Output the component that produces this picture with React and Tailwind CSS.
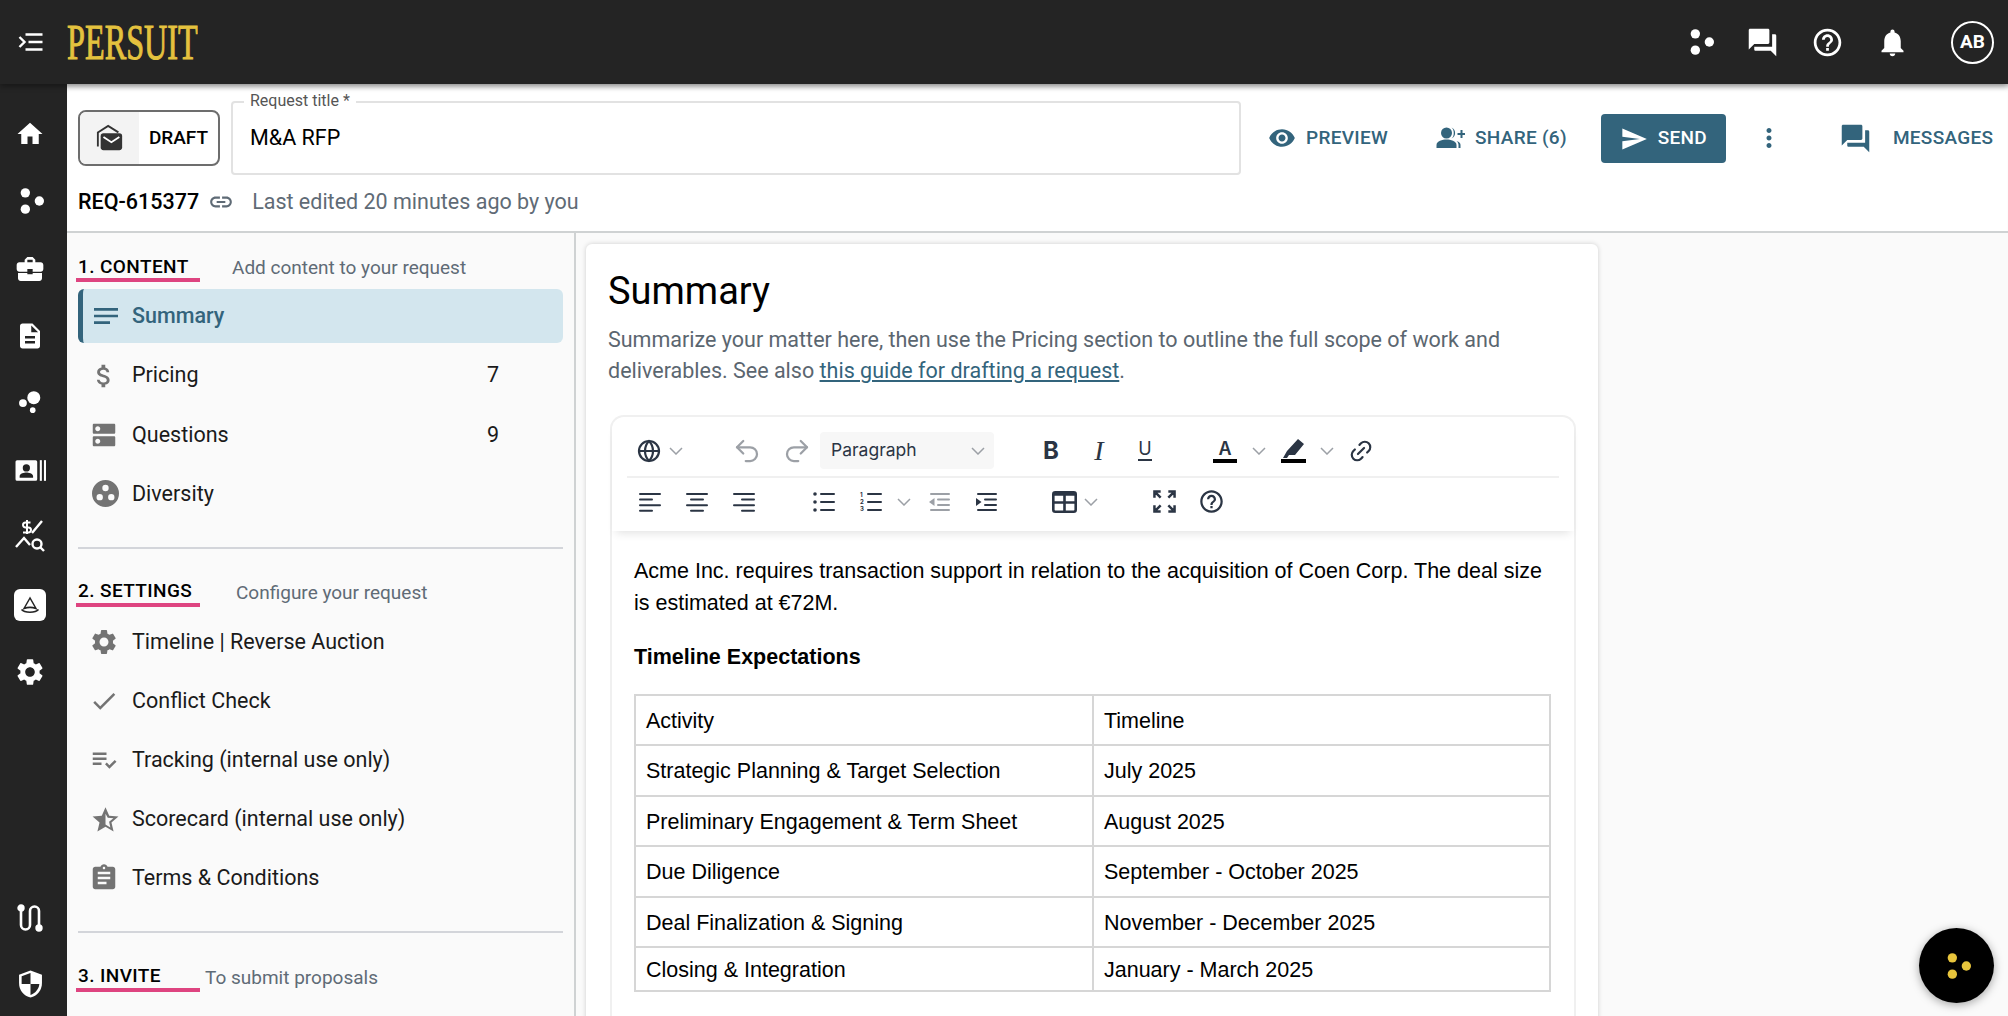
import {
  MdHome, MdBusinessCenter, MdDescription, MdSettings, MdForum, MdHelpOutline, MdNotifications,
  MdVisibility, MdSend, MdMoreVert, MdNotes, MdAttachMoney, MdDns, MdCheck,
  MdPlaylistAddCheck, MdAssignment, MdLink,
} from "react-icons/md"
import { Globe, Link2, Undo2, Redo2 } from "lucide-react"

const Dots = ({ className, fill = "currentColor" }) => (
  <svg viewBox="0 0 24 24" className={className} fill={fill}>
    <circle cx="8" cy="5" r="4" />
    <circle cx="8" cy="19" r="4" />
    <circle cx="20" cy="12" r="4" />
  </svg>
)

const Bubbles = ({ className }) => (
  <svg viewBox="0 0 24 24" className={className} fill="currentColor">
    <circle cx="15.5" cy="8" r="6" />
    <circle cx="5.5" cy="13" r="3.6" />
    <circle cx="14.5" cy="19.5" r="2.6" />
  </svg>
)

const PersonCard = ({ className }) => (
  <svg viewBox="0 0 30 24" className={className} fill="currentColor">
    <path d="M2 2h18a1.5 1.5 0 0 1 1.5 1.5v17A1.5 1.5 0 0 1 20 22H2A1.5 1.5 0 0 1 .5 20.500v-17A1.500 1.500 0 0 1 2 2zm9 4a3.500 3.500 0 1 0 0 7 3.500 3.500 0 0 0 0-7zm-6.500 13h13v-1.500c0-2.500-4.500-3.500-6.500-3.500s-6.500 1-6.500 3.500z" fillRule="evenodd" />
    <rect x="24" y="2" width="2" height="20" />
    <rect x="28" y="2" width="2" height="20" />
  </svg>
)

const ChartSearch = ({ className }) => (
  <svg viewBox="0 0 30 36" className={className} fill="none" stroke="currentColor" strokeWidth="2.400">
    <path d="M12 3v14M15.500 5.500H10.500a2.500 2.500 0 0 0 0 5h3a2.500 2.500 0 0 1 0 5H8" strokeWidth="2" />
    <path d="M1 30l8-9 6 7M17 16l10-12" />
    <circle cx="22" cy="27" r="4.500" />
    <path d="M25.500 30.500L29 34" />
  </svg>
)

const Route = ({ className }) => (
  <svg viewBox="0 0 26 28" className={className} fill="none" stroke="currentColor" strokeWidth="2.600">
    <circle cx="4" cy="4" r="2.400" fill="currentColor" />
    <circle cx="22" cy="24" r="2.400" fill="currentColor" />
    <path d="M4 6v15a4.500 4.500 0 0 0 9 0V7a4.500 4.500 0 0 1 9 0v15" />
  </svg>
)

const Shield = ({ className }) => (
  <svg viewBox="0 0 24 28" className={className} fill="currentColor">
    <path d="M12 1L1 5v8c0 7 4.700 12.500 11 14 6.300-1.500 11-7 11-14V5z" />
    <path d="M12 14H3.500V6.500L12 3.500zM12 14h8.500c-.5 5-4 9-8.500 10.500z" fill="#242424" />
  </svg>
)

const Boat = ({ className }) => (
  <svg viewBox="0 0 24 24" className={className} fill="none" stroke="#242424" strokeWidth="1.500">
    <path d="M12 5l-6 10.500c4 -1.500 8 -1.500 12 0z" />
    <path d="M3.500 16.500c3 3.500 14 3.500 17 0" />
  </svg>
)

const DraftIcon = ({ className }) => (
  <svg viewBox="0 0 30 30" className={className}>
    <path d="M2 24V9l11-7 11 7" fill="none" stroke="#333" strokeWidth="2" />
    <rect x="5" y="10" width="23" height="18" rx="3" fill="#333" />
    <path d="M8 14l8.500 5.500L25 14" fill="none" stroke="#fff" strokeWidth="2" />
  </svg>
)

const ShareIcon = ({ className }) => (
  <svg viewBox="0 0 28 24" className={className} fill="currentColor">
    <circle cx="10" cy="7" r="5.500" />
    <path d="M0 22v-3c0-4 6-5.500 10-5.500s10 1.500 10 5.500v3z" />
    <path d="M15 1.500a6 6 0 0 1 0 11c3-2 3-9 0-11zM20 15c3 .7 4 2.500 4 4v3h-2v-3c0-1.500-.7-3-2-4z" />
    <path d="M24 4v3h-3v2h3v3h2V9h3V7h-3V4z" />
  </svg>
)

const Diversity = ({ className }) => (
  <svg viewBox="0 0 28 30" className={className} fill="currentColor">
    <path fillRule="evenodd" d="M14 1a14 14 0 1 1 0 28 14 14 0 0 1 0-28zm0 5a3.300 3.300 0 1 0 0 6.600A3.300 3.300 0 0 0 14 6zm-6 9.500a3.300 3.300 0 1 0 0 6.600 3.300 3.300 0 0 0 0-6.600zm12 0a3.300 3.300 0 1 0 0 6.600 3.300 3.300 0 0 0 0-6.600z" />
  </svg>
)

const StarHalf = ({ className }) => (
  <svg viewBox="0 0 24 24" className={className} fill="none">
    <path d="M12 1l3.300 7.600 8.200.7-6.200 5.400 1.900 8L12 18.500 4.800 22.700l1.900-8L.5 9.300l8.200-.7z" fill="currentColor" />
    <path d="M12 6.800v9.600l4.300 2.600-1.100-4.900 3.800-3.300-5-.4z" fill="#fafafa" />
  </svg>
)

const MenuToggle = ({ className }) => (
  <svg viewBox="0 0 24 20" className={className} fill="none" stroke="currentColor" strokeWidth="2.400">
    <path d="M7 2.500h17M10 10h14M7 17.500h17" />
    <path d="M1 5l5 5-5 5" />
  </svg>
)

// little bars icons of the editor toolbar, each row is [x, width]
const Bars = ({ rows, className }) => (
  <svg viewBox="0 0 22 20" className={className} fill="currentColor">
    {rows.map(([x, w], i) => (
      <rect key={i} x={x} y={1 + i * 5.600} width={w} height="2" rx="1" />
    ))}
  </svg>
)

const BulletList = ({ className }) => (
  <svg viewBox="0 0 22 20" className={className} fill="currentColor">
    {[2, 10, 18].map((y) => (
      <g key={y}>
        <rect x="7" y={y - 1} width="15" height="2" rx="1" />
        <circle cx="2" cy={y} r="1.800" />
      </g>
    ))}
  </svg>
)

const NumberedList = ({ className = "" }) => (
  <div className={`w-[22px] h-[20px] flex ${className}`}>
    <div className="w-[7px] flex flex-col justify-between font-['Inter',sans-serif] text-[6px] leading-[6px] font-bold">
      <span>1</span>
      <span>2</span>
      <span>3</span>
    </div>
    <svg viewBox="0 0 15 20" className="w-[15px] h-[20px]" fill="currentColor">
      {[1, 9, 17].map((y) => (
        <rect key={y} y={y} width="15" height="2" rx="1" />
      ))}
    </svg>
  </div>
)

const IndentIcon = ({ outdent, className }) => (
  <svg viewBox="0 0 22 20" className={className} fill="currentColor">
    <rect x="2" y="1" width="20" height="2" rx="1" />
    <rect x="9" y="6.600" width="13" height="2" rx="1" />
    <rect x="9" y="12" width="13" height="2" rx="1" />
    <rect x="2" y="17" width="20" height="2" rx="1" />
    <path d={outdent ? "M6.500 6v8L1 10z" : "M1 6v8l5.500-4z"} />
  </svg>
)

const TableIcon = ({ className }) => (
  <svg viewBox="0 0 25 22" className={className} fill="none" stroke="currentColor" strokeWidth="2.600">
    <rect x="1.300" y="1.300" width="22.400" height="19.400" rx="2" />
    <path d="M12.500 2v18M1 11.500h23" />
    <path d="M1 3h23" strokeWidth="3.500" />
  </svg>
)

const ExpandIcon = ({ className }) => (
  <svg viewBox="0 0 24 24" className={className} fill="none" stroke="currentColor" strokeWidth="2.600">
    <path d="M1.500 8V1.500H8M22.500 8V1.500H16M1.500 16v6.500H8M22.500 16v6.500H16M3 3l5 5M21 3l-5 5M3 21l5-5M21 21l-5-5" />
  </svg>
)

const Chevron = ({ className = "" }) => (
  <svg viewBox="0 0 14 8" className={`w-[14px] h-[8px] text-[#9ca0a6] ${className}`} fill="none" stroke="currentColor" strokeWidth="1.500">
    <path d="M1 1l6 6 6-6" />
  </svg>
)

const railTop = [
  { icon: <MdHome className="w-[30px] h-[30px]" />, y: "mt-[35px]" },
  { icon: <Dots className="w-[28px] h-[28px]" />, y: "mt-[38px]" },
  { icon: <MdBusinessCenter className="w-[32px] h-[32px]" />, y: "mt-[38px]" },
  { icon: <MdDescription className="w-[30px] h-[30px]" />, y: "mt-[36px]" },
  { icon: <Bubbles className="w-[26px] h-[26px]" />, y: "mt-[38px]" },
  { icon: <PersonCard className="w-[31px] h-[25px]" />, y: "mt-[43px]" },
  { icon: <ChartSearch className="w-[30px] h-[36px]" />, y: "mt-[34px]" },
]

const contentItems = [
  { label: "Pricing", count: "7", icon: <MdAttachMoney className="w-[30px] h-[30px]" /> },
  { label: "Questions", count: "9", icon: <MdDns className="w-[30px] h-[30px]" /> },
  { label: "Diversity", icon: <Diversity className="w-[27px] h-[29px] ml-[3px]" /> },
]

const settingsItems = [
  { label: "Timeline | Reverse Auction", icon: <MdSettings className="w-[30px] h-[30px]" /> },
  { label: "Conflict Check", icon: <MdCheck className="w-[30px] h-[30px]" /> },
  { label: "Tracking (internal use only)", icon: <MdPlaylistAddCheck className="w-[30px] h-[30px]" /> },
  { label: "Scorecard (internal use only)", icon: <StarHalf className="w-[27px] h-[27px] ml-[3px]" /> },
  { label: "Terms & Conditions", icon: <MdAssignment className="w-[30px] h-[30px]" /> },
]

const timeline = [
  ["Activity", "Timeline", "h-[50px]"],
  ["Strategic Planning & Target Selection", "July 2025", "h-[51px]"],
  ["Preliminary Engagement & Term Sheet", "August 2025", "h-[50px]"],
  ["Due Diligence", "September - October 2025", "h-[51px]"],
  ["Deal Finalization & Signing", "November - December 2025", "h-[50px]"],
  ["Closing & Integration", "January - March 2025", "h-[44px]"],
]

const SectionHead = ({ title, hint, hintClass, className = "" }) => (
  <div className={`flex items-center relative h-[28px] ${className}`}>
    <span className="text-[19px] font-medium tracking-[0.4px] text-black">{title}</span>
    <span className={`absolute top-[1px] text-[19px] text-[#5f6b76] ${hintClass}`}>{hint}</span>
    <div className="absolute left-[-2px] top-[25px] w-[124px] h-[4px] bg-[#de4480]" />
  </div>
)

const NavItem = ({ icon, label, count }) => (
  <div className="flex items-center h-[59.200px] text-[21.500px] text-[#1a1a1a]">
    <div className="w-[54px] pl-[11px] text-[#737373] flex items-center">{icon}</div>
    <span>{label}</span>
    {count && <span className="ml-auto mr-[64px]">{count}</span>}
  </div>
)

export default function App() {
  return (
    <div className="w-[2008px] h-[1016px] overflow-hidden relative flex flex-col bg-[#fafafa] font-['Roboto',sans-serif]">
      <header className="h-[84px] shrink-0 bg-[#242424] flex items-center text-white shadow-[0_2px_6px_rgba(0,0,0,0.4)] z-10">
        <div className="w-[67px] flex justify-center pr-[6px]">
          <MenuToggle className="w-[25px] h-[20px]" />
        </div>
        <div className="w-[130px] overflow-visible">
          <div className="font-['Liberation_Serif',serif] text-[50px] leading-none text-[#e4c23e] origin-left scale-x-[0.645] whitespace-nowrap [-webkit-text-stroke:1px_#e4c23e]">
            PERSUIT
          </div>
        </div>
        <div className="ml-auto flex items-center">
          <Dots className="w-[28px] h-[28px]" />
          <MdForum className="w-[33px] h-[33px] ml-[32px]" />
          <MdHelpOutline className="w-[33px] h-[33px] ml-[32px]" />
          <MdNotifications className="w-[33px] h-[33px] ml-[32px]" />
          <div className="w-[43px] h-[43px] ml-[42px] mr-[14px] rounded-full border-2 border-white flex items-center justify-center text-[19px] font-bold">
            AB
          </div>
        </div>
      </header>

      <div className="flex flex-1 min-h-0">
        <aside className="w-[67px] shrink-0 bg-[#242424] text-white flex flex-col items-center pr-[7px]">
          {railTop.map((r, i) => (
            <div key={i} className={r.y}>{r.icon}</div>
          ))}
          <div className="mt-[36px] w-[32px] h-[32px] shrink-0 rounded-[6px] bg-white flex items-center justify-center">
            <Boat className="w-[24px] h-[24px]" />
          </div>
          <MdSettings className="w-[32px] h-[32px] mt-[35px] shrink-0" />
          <Route className="w-[26px] h-[28px] mt-[216px] shrink-0" />
          <Shield className="w-[25px] h-[30px] mt-[37px] shrink-0" />
        </aside>

        <div className="flex-1 min-w-0 flex flex-col">
          <div className="h-[149px] shrink-0 bg-white border-b-2 border-[#cfd2d3] pl-[11px] shadow-[inset_0_6px_6px_-5px_rgba(0,0,0,0.2)]">
            <div className="flex items-start pt-[17px]">
              <div className="mt-[9px] w-[142px] h-[56px] rounded-[8px] border-2 border-[#6d6d6d] flex overflow-hidden">
                <div className="w-[59px] bg-[#f3f3f3] flex items-center justify-center">
                  <DraftIcon className="w-[28px] h-[28px]" />
                </div>
                <div className="flex-1 flex items-center justify-center text-[19px] font-medium text-black">DRAFT</div>
              </div>
              <div className="ml-[11px] w-[1010px] h-[74px] rounded-[4px] border-2 border-[#e2e2e2] relative flex items-center pl-[17px] text-[21.500px] text-black">
                <span className="absolute left-[11px] top-[-12px] bg-white px-[6px] text-[16px] leading-[20px] text-[#555]">Request title *</span>
                M&amp;A RFP
              </div>
              <div className="flex items-center h-[50px] mt-[12px] text-[#33647c] text-[19px] font-medium tracking-[0.3px]">
                <MdVisibility className="w-[28px] h-[28px] ml-[27px]" />
                <span className="ml-[10px]">PREVIEW</span>
                <ShareIcon className="w-[29px] h-[24px] ml-[48px]" />
                <span className="ml-[10px]">SHARE (6)</span>
                <button className="ml-[34px] w-[125px] h-[49px] mt-[1px] rounded-[4px] bg-[#33647c] text-white flex items-center justify-center gap-[10px] font-medium tracking-[0.3px]">
                  <MdSend className="w-[28px] h-[28px]" />
                  SEND
                </button>
                <MdMoreVert className="w-[30px] h-[30px] ml-[28px]" />
                <MdForum className="w-[33px] h-[33px] ml-[55px]" />
                <span className="ml-[21px]">MESSAGES</span>
              </div>
            </div>
            <div className="flex items-center mt-[9px] h-[36px]">
              <span className="text-[21.500px] font-medium text-black">REQ-615377</span>
              <MdLink className="w-[26px] h-[26px] ml-[9px] text-[#5f6b76]" />
              <span className="ml-[18px] text-[21.500px] text-[#5f6b76]">Last edited 20 minutes ago by you</span>
            </div>
          </div>

          <div className="flex flex-1 min-h-0">
            <nav className="w-[509px] shrink-0 border-r-2 border-[#cfd2d3] px-[11px] pt-[20px]">
              <SectionHead title="1. CONTENT" hint="Add content to your request" hintClass="left-[154px]" />
              <div className="mt-[8px] h-[54px] rounded-[6px] bg-[#d3e6ee] border-l-[5px] border-[#33647c] flex items-center text-[21.500px] font-medium text-[#33647c]">
                <MdNotes className="w-[32px] h-[32px] ml-[7px]" />
                <span className="ml-[10px] pt-[1px]">Summary</span>
              </div>
              <div className="mt-[3px]">
                {contentItems.map((it) => <NavItem key={it.label} {...it} />)}
              </div>
              <div className="mt-[23px] h-[2px] bg-[#d3d5da]" />
              <SectionHead title="2. SETTINGS" hint="Configure your request" hintClass="left-[158px]" className="mt-[29px]" />
              <div className="mt-[6.500px]">
                {settingsItems.map((it) => <NavItem key={it.label} {...it} />)}
              </div>
              <div className="mt-[22.500px] h-[2px] bg-[#d3d5da]" />
              <SectionHead title="3. INVITE" hint="To submit proposals" hintClass="left-[127px]" className="mt-[30px]" />
            </nav>

            <main className="flex-1 min-w-0 pl-[10px] pt-[11px]">
              <section className="w-[1012px] h-[900px] rounded-t-[6px] bg-white shadow-[0_0_5px_rgba(0,0,0,0.18)] pl-[22px] pt-[26px]">
                <h1 className="text-[38px] leading-[42px] font-normal text-black">Summary</h1>
                <p className="mt-[12px] text-[21.500px] leading-[31px] text-[#5b6670] w-[960px]">
                  Summarize your matter here, then use the Pricing section to outline the full scope of work and deliverables. See also{" "}
                  <span className="text-[#33647c] underline">this guide for drafting a request</span>.
                </p>
                <div className="mt-[29px] ml-[2px] w-[966px] h-[700px] rounded-t-[14px] border-2 border-[#f0f0f0] border-b-0">
                  <div className="h-[114px] rounded-t-[14px] px-[15px] text-[#2b3544] shadow-[0_6px_10px_-4px_rgba(0,0,0,0.12)] relative">
                    <div className="h-[61px] pt-[8px] flex items-center border-b-2 border-[#f0f0f0]">
                      <Globe className="w-[24px] h-[24px] ml-[10px]" strokeWidth={2.2} />
                      <Chevron className="ml-[8px]" />
                      <Undo2 className="w-[30px] h-[30px] ml-[49px] text-[#9ca0a6]" strokeWidth={1.8} />
                      <Redo2 className="w-[30px] h-[30px] ml-[20px] text-[#9ca0a6]" strokeWidth={1.8} />
                      <div className="ml-[8px] w-[174px] h-[37px] rounded-[4px] bg-[#f7f7f7] flex items-center pl-[11px] pr-[9px] font-['Inter',sans-serif] text-[17.500px] text-[#2b3544]">
                        Paragraph
                        <Chevron className="ml-auto" />
                      </div>
                      <span className="ml-[49px] w-[17px] font-['Inter',sans-serif] text-[24px] font-bold leading-none">B</span>
                      <span className="ml-[28px] w-[22px] text-center font-['Liberation_Serif',serif] italic text-[28px] leading-none">I</span>
                      <div className="ml-[28px] w-[14px] flex flex-col items-center">
                        <span className="font-['Inter',sans-serif] text-[18px] leading-[18px]">U</span>
                        <div className="w-[14px] h-[2px] mt-[1px] bg-current" />
                      </div>
                      <div className="ml-[61px] w-[24px] flex flex-col items-center">
                        <span className="font-['Inter',sans-serif] text-[18px] leading-[20px] font-semibold">A</span>
                        <div className="w-[24px] h-[4px] bg-black" />
                      </div>
                      <Chevron className="ml-[15px]" />
                      <div className="ml-[15px] w-[25px] flex flex-col items-center">
                        <svg viewBox="0 0 24 20" className="w-[24px] h-[20px]" fill="currentColor">
                          <path d="M16 0l6 5-9 11H7l-2 3H1l4-7z" />
                        </svg>
                        <div className="w-[25px] h-[4px] bg-black" />
                      </div>
                      <Chevron className="ml-[14px]" />
                      <Link2 className="w-[26px] h-[26px] ml-[14px] -rotate-45" strokeWidth={2} />
                    </div>
                    <div className="h-[51px] pb-[4px] flex items-center">
                      <Bars className="w-[22px] h-[20px] ml-[12px]" rows={[[0, 22], [0, 14], [0, 22], [0, 14]]} />
                      <Bars className="w-[22px] h-[20px] ml-[25px]" rows={[[0, 22], [4, 14], [0, 22], [4, 14]]} />
                      <Bars className="w-[22px] h-[20px] ml-[25px]" rows={[[0, 22], [8, 14], [0, 22], [8, 14]]} />
                      <BulletList className="w-[22px] h-[20px] ml-[58px]" />
                      <NumberedList className="ml-[25px]" />
                      <Chevron className="ml-[15px]" />
                      <IndentIcon outdent className="w-[22px] h-[20px] ml-[17px] text-[#9ca0a6]" />
                      <IndentIcon className="w-[22px] h-[20px] ml-[25px]" />
                      <TableIcon className="w-[25px] h-[22px] ml-[55px]" />
                      <Chevron className="ml-[7px]" />
                      <ExpandIcon className="w-[23px] h-[23px] ml-[55px]" />
                      <MdHelpOutline className="w-[27px] h-[27px] ml-[22px]" />
                    </div>
                  </div>
                  <div className="pl-[22px] pt-[24px] font-['Liberation_Sans',Arial,sans-serif] text-[21.500px] text-black">
                    <p className="leading-[32px] w-[917px]">
                      Acme Inc. requires transaction support in relation to the acquisition of Coen Corp. The deal size is estimated at €72M.
                    </p>
                    <p className="mt-[22px] leading-[32px] font-bold">Timeline Expectations</p>
                    <table className="mt-[21px] w-[917px] border-collapse">
                      <tbody>
                        {timeline.map(([a, b, h]) => (
                          <tr key={a} className={h}>
                            <td className="w-[458px] border-2 border-[#d6d6d6] px-[10px] pt-[2px] pb-0">{a}</td>
                            <td className="border-2 border-[#d6d6d6] px-[10px] pt-[2px] pb-0">{b}</td>
                          </tr>
                        ))}
                      </tbody>
                    </table>
                  </div>
                </div>
              </section>
            </main>
          </div>
        </div>
      </div>

      <div className="absolute left-[1919px] top-[928px] w-[75px] h-[75px] rounded-full bg-black flex items-center justify-center shadow-[0_2px_10px_rgba(0,0,0,0.35)]">
        <Dots className="w-[28px] h-[28px]" fill="#e8c53c" />
      </div>
    </div>
  )
}
